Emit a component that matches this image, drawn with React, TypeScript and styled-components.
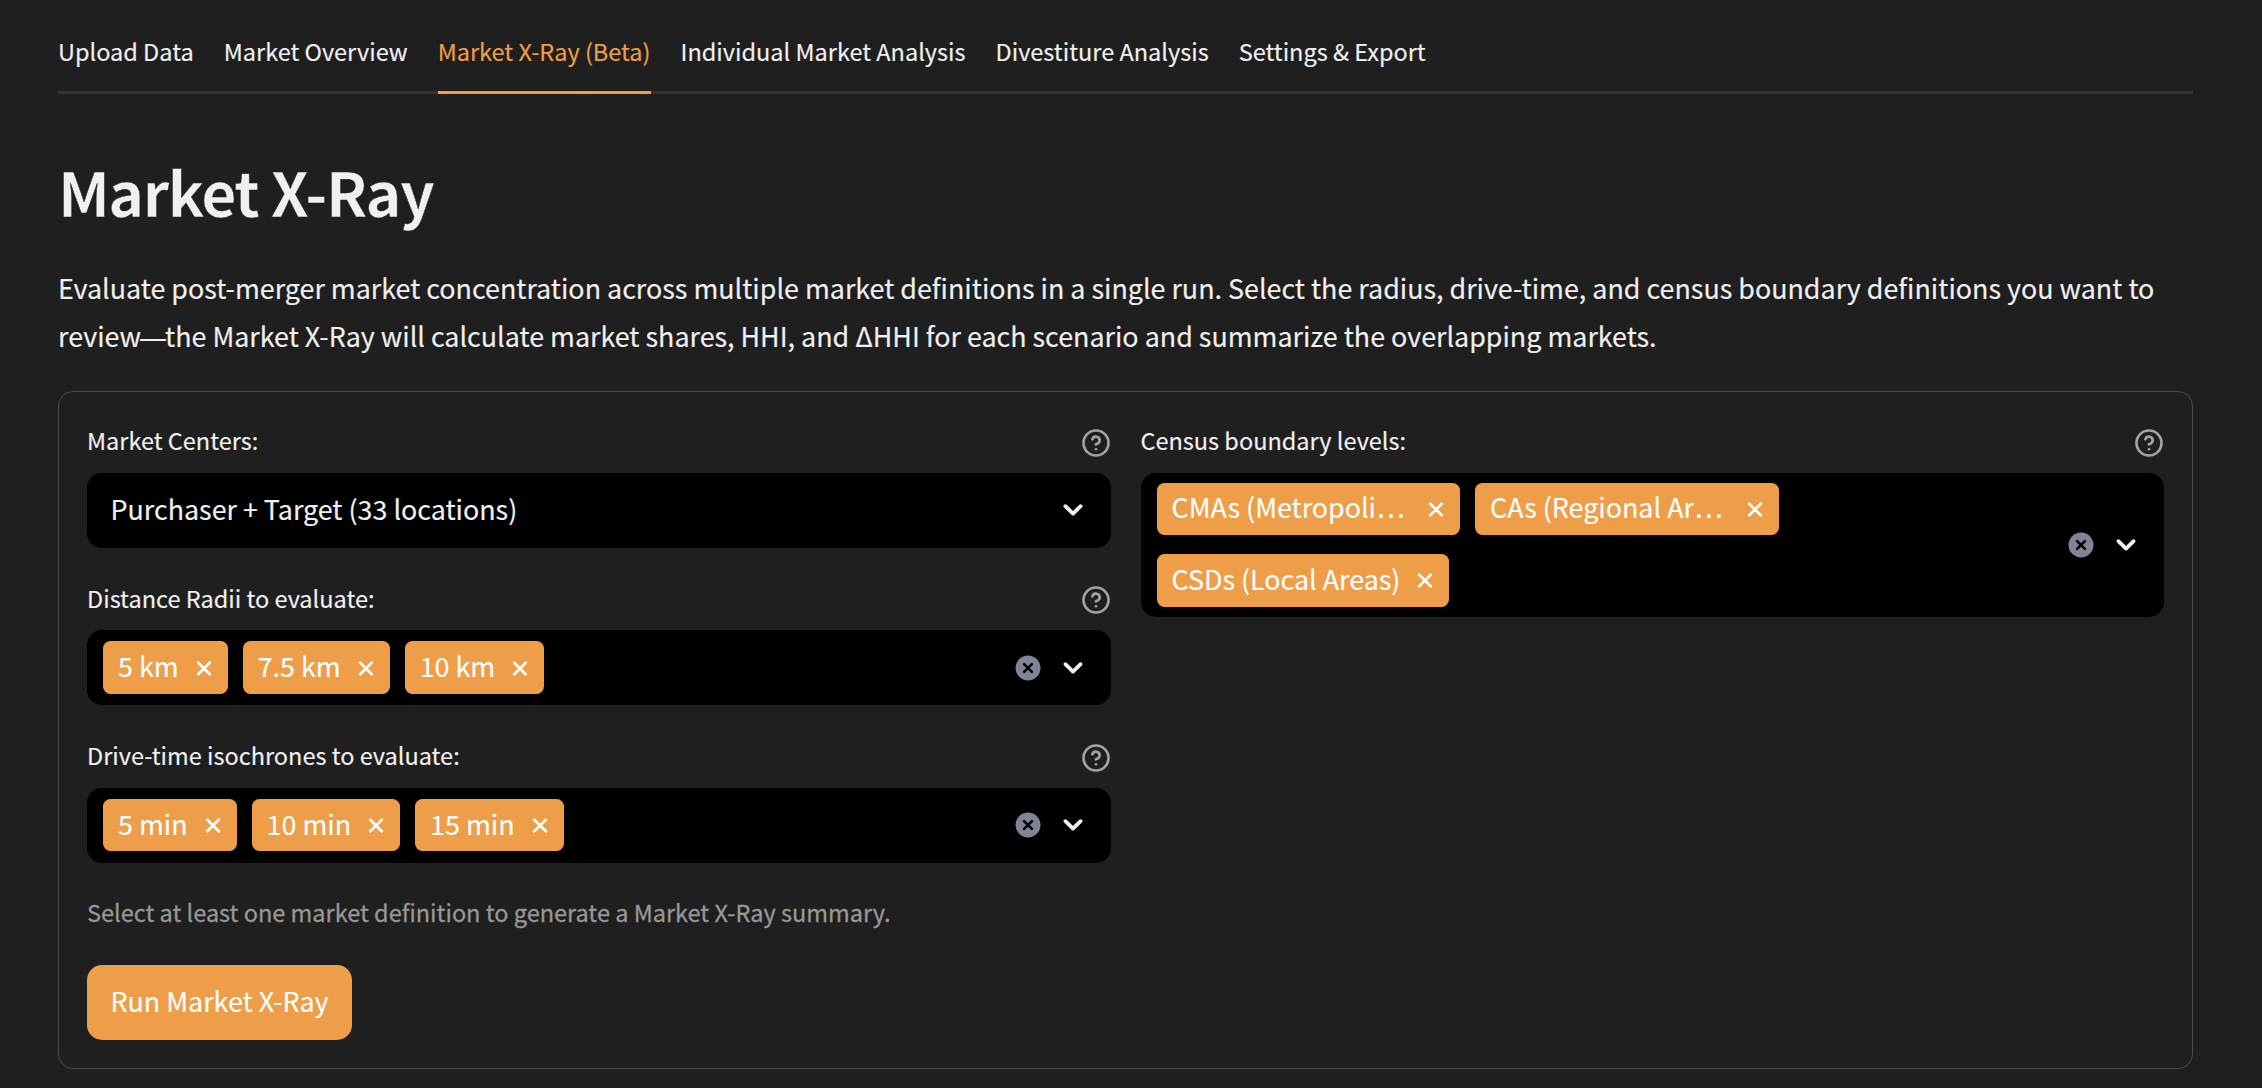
import React from "react";
import styled, { createGlobalStyle } from "styled-components";

const color = {
  bg: "#1f1f1f",
  field: "#000000",
  text: "#f0f0f0",
  muted: "#979797",
  accent: "#ee9e48",
  line: "#333333",
  cardLine: "#4b4b4b",
  clear: "#808495",
};

const GlobalStyle = createGlobalStyle`
  *, *::before, *::after { box-sizing: border-box; }
  body {
    margin: 0;
    background: ${color.bg};
    color: ${color.text};
    font-family: "Noto Sans CJK SC", "Noto Sans", sans-serif;
    font-size: 26.86px;
    font-weight: 400;
    -webkit-text-stroke: 0.15px currentColor;
  }
`;

const Page = styled.main`
  display: flex;
  flex-direction: column;
  width: 2262px;
  height: 1088px;
  padding: 13px 69px 0 58px;
  overflow: hidden;
`;

const TabList = styled.nav`
  display: flex;
  gap: 30px;
  height: 81px;
  border-bottom: 3px solid ${color.line};
`;

const Tab = styled.button<{ $active?: boolean }>`
  flex: none;
  height: 81px;
  padding: 0 0 2px;
  border: 0;
  border-bottom: 3px solid ${(p) => (p.$active ? color.accent : "transparent")};
  background: none;
  color: ${(p) => (p.$active ? color.accent : color.text)};
  font-family: inherit;
  font-size: 23.5px;
  line-height: 76px;
  white-space: nowrap;
`;

const Title = styled.h1`
  margin: 56px 0 0;
  height: 81px;
  font-size: 60.8px;
  font-weight: 700;
  line-height: 81px;
  letter-spacing: -1.5px;
  -webkit-text-stroke: 0.5px ${color.bg};
`;

const Intro = styled.p`
  margin: 32.5px 0 0;
  line-height: 48px;
  white-space: nowrap;
`;

const Dash = styled.span`
  margin: 0 -2px;
  font-family: "Open Sans", sans-serif;
  font-size: 28px;
  line-height: 0;
`;

const Card = styled.section`
  margin-top: 31.3px;
  padding: 28.4px 28px;
  border: 1px solid ${color.cardLine};
  border-radius: 15px;
`;

const Columns = styled.div`
  display: grid;
  grid-template-columns: 1fr 1fr;
  column-gap: 30px;
`;

const Column = styled.div`
  display: flex;
  flex-direction: column;
  gap: 30px;
`;

const LabelRow = styled.div`
  display: flex;
  align-items: center;
  justify-content: space-between;
  height: 45px;
  margin-bottom: 7.5px;
  font-size: 23.5px;
  line-height: 41px;

  span { padding-bottom: 4px; }
`;

const FieldBox = styled.div<{ $tall?: boolean }>`
  display: flex;
  align-items: center;
  height: ${(p) => (p.$tall ? "144px" : "75px")};
  padding: 0 23px 0 16px;
  border-radius: 15px;
  background: ${color.field};
`;

const Value = styled.span`
  flex: 1;
  padding: 0 0 3px 7.5px;
  line-height: 48px;
`;

const Chips = styled.div`
  display: flex;
  flex: 1;
  flex-wrap: wrap;
  gap: 19px 15px;
  padding-right: 200px;
`;

const ChipBox = styled.span<{ $wide?: boolean }>`
  display: flex;
  align-items: center;
  justify-content: space-between;
  width: ${(p) => (p.$wide ? "303.5px" : "auto")};
  height: 52.5px;
  padding: 0 15px;
  border-radius: 7.5px;
  background: ${color.accent};
  color: #ffffff;
  line-height: 48px;
  white-space: nowrap;

  svg { margin-left: 16px; }
`;

const ChipText = styled.span`
  padding-bottom: 3px;
`;

const Ellipsis = styled.span`
  font-family: "DejaVu Sans", sans-serif;
  font-size: 30px;
  line-height: 0;
`;

const Controls = styled.div`
  display: flex;
  align-items: center;
  gap: 15px;
`;

const Caption = styled.p`
  margin: 28px 0 0;
  color: ${color.muted};
  font-size: 23.5px;
  line-height: 42px;
  -webkit-text-stroke: 0.3px currentColor;
`;

const RunButton = styled.button`
  display: block;
  height: 75px;
  margin-top: 32px;
  padding: 0 23.5px 3px;
  border: 0;
  border-radius: 15px;
  background: ${color.accent};
  color: #ffffff;
  font-family: inherit;
  font-size: 26.86px;
  line-height: 48px;
`;

const HelpIcon = () => (
  <svg width="30" height="30" viewBox="0 0 24 24" fill="none" stroke="#a3a3a3" strokeWidth="2.15" strokeLinecap="round" strokeLinejoin="round">
    <circle cx="12" cy="12" r="10" />
    <path d="M9.09 9a3 3 0 0 1 5.83 1c0 2-3 3-3 3" />
    <path d="M12 17h.01" />
  </svg>
);

const ChevronIcon = () => (
  <svg width="30" height="30" viewBox="0 0 30 30" fill="none" stroke={color.text} strokeWidth="3.8" strokeLinecap="round" strokeLinejoin="round">
    <path d="M7.4 11.2 15 18.6 22.6 11.2" />
  </svg>
);

const ClearIcon = () => (
  <svg width="30" height="30" viewBox="0 0 30 30" fill="none" strokeLinecap="round">
    <circle cx="15" cy="15" r="12.5" fill={color.clear} />
    <path d="m11.1 11.1 7.8 7.8m0-7.8-7.8 7.8" stroke="#000000" strokeWidth="2.6" />
  </svg>
);

const RemoveIcon = () => (
  <svg width="18" height="18" viewBox="0 0 18 18" fill="none" stroke="#ffffff" strokeWidth="2.7" strokeLinecap="round">
    <path d="m3.2 3.7 11.6 11.6m0-11.6L3.2 15.3" />
  </svg>
);

const Label = ({ children }: { children: React.ReactNode }) => (
  <LabelRow>
    <span>{children}</span>
    <HelpIcon />
  </LabelRow>
);

type ChipData = { text: string; cut?: boolean };

const MultiSelect = ({ label, chips, tall }: { label: string; chips: ChipData[]; tall?: boolean }) => (
  <div>
    <Label>{label}</Label>
    <FieldBox $tall={tall}>
      <Chips>
        {chips.map((c) => (
          <ChipBox key={c.text} $wide={c.cut}>
            <ChipText>
              {c.text}
              {c.cut && <Ellipsis>…</Ellipsis>}
            </ChipText>
            <RemoveIcon />
          </ChipBox>
        ))}
      </Chips>
      <Controls>
        <ClearIcon />
        <ChevronIcon />
      </Controls>
    </FieldBox>
  </div>
);

const tabs = [
  "Upload Data",
  "Market Overview",
  "Market X-Ray (Beta)",
  "Individual Market Analysis",
  "Divestiture Analysis",
  "Settings & Export",
];

export default function App() {
  return (
    <>
      <GlobalStyle />
      <Page>
        <TabList>
          {tabs.map((t, i) => (
            <Tab key={t} $active={i === 2}>{t}</Tab>
          ))}
        </TabList>
        <Title>Market X-Ray</Title>
        <Intro>
          Evaluate post-merger market concentration across multiple market definitions in a single run. Select the radius, drive-time, and census boundary definitions you want to
          <br />
          review<Dash>—</Dash>the Market X-Ray will calculate market shares, HHI, and ΔHHI for each scenario and summarize the overlapping markets.
        </Intro>
        <Card>
          <Columns>
            <Column>
              <div>
                <Label>Market Centers:</Label>
                <FieldBox>
                  <Value>Purchaser + Target (33 locations)</Value>
                  <ChevronIcon />
                </FieldBox>
              </div>
              <MultiSelect
                label="Distance Radii to evaluate:"
                chips={[{ text: "5 km" }, { text: "7.5 km" }, { text: "10 km" }]}
              />
              <MultiSelect
                label="Drive-time isochrones to evaluate:"
                chips={[{ text: "5 min" }, { text: "10 min" }, { text: "15 min" }]}
              />
            </Column>
            <Column>
              <MultiSelect
                tall
                label="Census boundary levels:"
                chips={[
                  { text: "CMAs (Metropoli", cut: true },
                  { text: "CAs (Regional Ar", cut: true },
                  { text: "CSDs (Local Areas)" },
                ]}
              />
            </Column>
          </Columns>
          <Caption>Select at least one market definition to generate a Market X-Ray summary.</Caption>
          <RunButton>Run Market X-Ray</RunButton>
        </Card>
      </Page>
    </>
  );
}
